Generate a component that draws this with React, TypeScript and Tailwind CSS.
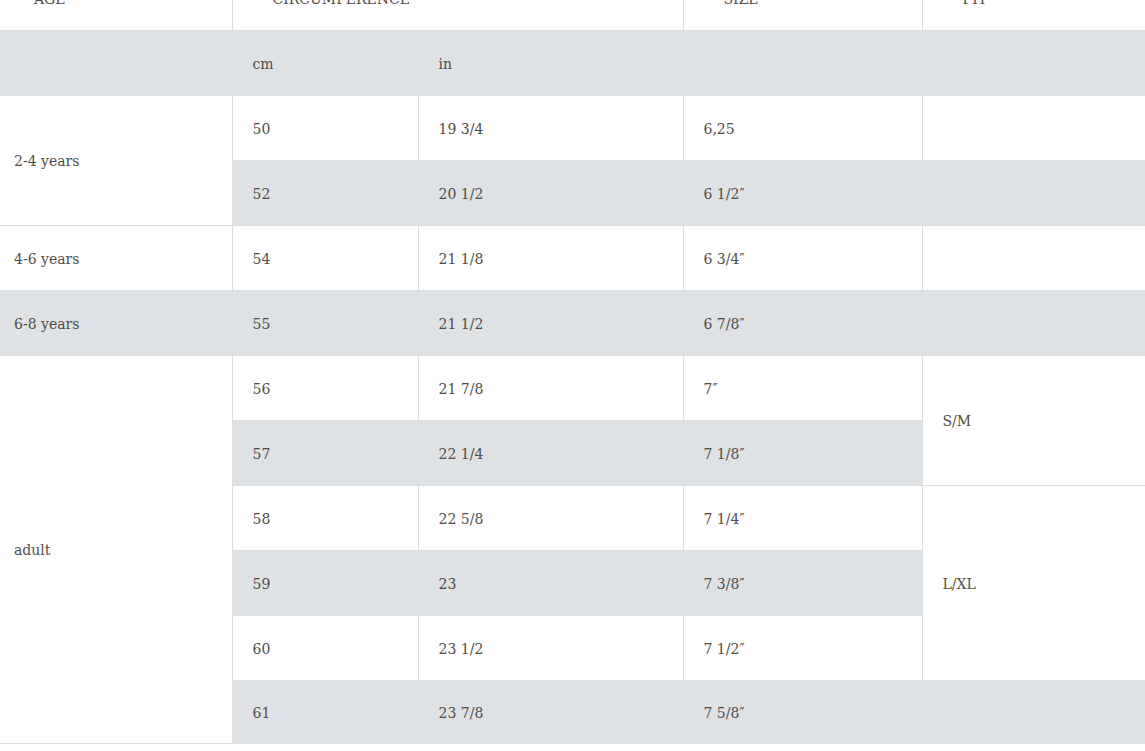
import React from "react";

const G = "bg-[#dfe2e5]";

type Cell = { t?: string; rs?: number; first?: boolean };
type Row = { grey: boolean; cells: Cell[] };

const rows: Row[] = [
  { grey: false, cells: [{ t: "2-4 years", rs: 2, first: true }, { t: "50" }, { t: "19 3/4" }, { t: "6,25" }, { t: "" }] },
  { grey: true, cells: [{ t: "52" }, { t: "20 1/2" }, { t: "6 1/2″" }, { t: "" }] },
  { grey: false, cells: [{ t: "4-6 years", first: true }, { t: "54" }, { t: "21 1/8" }, { t: "6 3/4″" }, { t: "" }] },
  { grey: true, cells: [{ t: "6-8 years", first: true }, { t: "55" }, { t: "21 1/2" }, { t: "6 7/8″" }, { t: "" }] },
  { grey: false, cells: [{ t: "adult", rs: 6, first: true }, { t: "56" }, { t: "21 7/8" }, { t: "7″" }, { t: "S/M", rs: 2 }] },
  { grey: true, cells: [{ t: "57" }, { t: "22 1/4" }, { t: "7 1/8″" }] },
  { grey: false, cells: [{ t: "58" }, { t: "22 5/8" }, { t: "7 1/4″" }, { t: "L/XL", rs: 3 }] },
  { grey: true, cells: [{ t: "59" }, { t: "23" }, { t: "7 3/8″" }] },
  { grey: false, cells: [{ t: "60" }, { t: "23 1/2" }, { t: "7 1/2″" }] },
  { grey: true, cells: [{ t: "61" }, { t: "23 7/8" }, { t: "7 5/8″" }, { t: "" }] },
];

const base = "border border-[#dcdfe2] pr-2 pt-[2px] pb-0 align-middle";
const tdN = `${base} pl-[20px]`;
const tdF = `${base} border-l-0 pl-[14px]`;

export default function App() {
  return (
    <div
      className="w-[1145px] h-[751px] overflow-hidden bg-white text-[#524c49] text-[14px]"
      style={{ fontFamily: '"DejaVu Serif", "Liberation Serif", serif' }}
    >
      <table className="table-fixed border-collapse w-[1145px] -mt-[35px]">
        <colgroup>
          <col className="w-[232px]" />
          <col className="w-[186px]" />
          <col className="w-[265px]" />
          <col className="w-[239px]" />
          <col className="w-[223px]" />
        </colgroup>
        <thead>
          <tr className="h-[65px]">
            <th className={`${base} border-l-0 text-left font-normal pl-[34px] uppercase`}>Age</th>
            <th colSpan={2} className={`${base} text-left font-normal pl-[40px] uppercase`}>Circumference</th>
            <th className={`${base} text-left font-normal pl-[40px] uppercase`}>Size</th>
            <th className={`${base} text-left font-normal pl-[40px] uppercase`}>Fit</th>
          </tr>
        </thead>
        <tbody>
          <tr className={`h-[65px] ${G}`}>
            <td className={tdF}></td>
            <td className={tdN}>cm</td>
            <td className={tdN}>in</td>
            <td className={tdN}></td>
            <td className={tdN}></td>
          </tr>
          {rows.map((r, i) => (
            <tr
              key={i}
              className={`${i === rows.length - 1 ? "h-[63px]" : "h-[65px]"} ${r.grey ? G : "bg-white"}`}
            >
              {r.cells.map((c, j) => (
                <td key={j} rowSpan={c.rs} className={c.first ? tdF : tdN}>
                  {c.t}
                </td>
              ))}
            </tr>
          ))}
        </tbody>
      </table>
    </div>
  );
}
